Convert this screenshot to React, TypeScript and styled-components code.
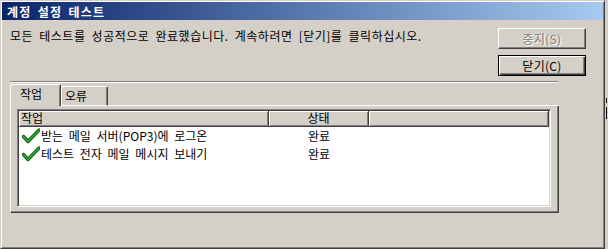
import React from "react";
import styled, { createGlobalStyle, css } from "styled-components";

const GlobalStyle = createGlobalStyle`
  html, body { margin: 0; padding: 0; background: #d4d0c8; }
  body {
    width: 608px; height: 249px; overflow: hidden;
    font-family: "Noto Sans CJK KR", "Noto Sans", sans-serif;
    font-size: 12px; color: #000;
  }
`;

const Screen = styled.div`
  display: flex;
  width: 608px;
  height: 249px;
`;

const Window = styled.div`
  box-sizing: border-box;
  width: 605px;
  height: 249px;
  flex: none;
  border: 1px solid;
  border-color: #d4d0c8 #404040 #404040 #d4d0c8;
  box-shadow: inset 1px 1px #fff, inset -1px -1px #808080;
  padding: 1px;
  display: flex;
  flex-direction: column;
  background: #d4d0c8;
`;

const TitleBar = styled.div`
  height: 18px;
  flex: none;
  display: flex;
  align-items: center;
  padding-left: 5px;
  background: linear-gradient(to right, #0a246a, #a6caf0);
  color: #fff;
  font-weight: bold;
  font-size: 12px;
  letter-spacing: 1.3px;
  word-spacing: 2px;
`;

const TopRow = styled.div`
  display: flex;
  justify-content: space-between;
  align-items: flex-start;
  padding: 8px 17px 0 8px;
`;

const Message = styled.div`
  line-height: 15px;
  letter-spacing: 0.5px;
  word-spacing: 3px;
`;

const ButtonColumn = styled.div`
  display: flex;
  flex-direction: column;
  gap: 6px;
`;

const Button = styled.button<{ $default?: boolean }>`
  box-sizing: border-box;
  width: 88px;
  height: 21px;
  padding: 0;
  margin: 0;
  background: #d4d0c8;
  font: inherit;
  font-size: 12px;
  line-height: 16px;
  letter-spacing: 0.3px;
  color: #000;
  border: 1px solid;
  border-color: #fff #404040 #404040 #fff;
  box-shadow: inset -1px -1px #808080;
  ${(p) =>
    p.$default &&
    css`
      border-color: #000;
      box-shadow: inset 1px 1px #fff, inset -1px -1px #404040,
        inset -2px -2px #808080;
    `}
  &:disabled {
    color: #808080;
    text-shadow: 1px 1px #fff;
  }
`;

const Separator = styled.div`
  width: 548px;
  height: 0;
  margin: 5px 0 0 8px;
  border-top: 1px solid #808080;
  border-bottom: 1px solid #fff;
`;

const TabSection = styled.div`
  width: 549px;
  margin: 1px 0 0 8px;
  display: flex;
  flex-direction: column;
`;

const TabStrip = styled.div`
  display: flex;
  align-items: flex-end;
  height: 22px;
`;

const Tab = styled.div<{ $active?: boolean }>`
  box-sizing: border-box;
  display: flex;
  align-items: center;
  line-height: 16px;
  border-top: 1px solid #fff;
  border-left: 1px solid #fff;
  border-right: 1px solid #404040;
  box-shadow: inset -1px 0 #808080;
  border-radius: 2px 2px 0 0;
  ${(p) =>
    p.$active
      ? css`
          width: 51px;
          height: 22px;
          padding: 0 0 4px 9px;
        `
      : css`
          width: 47px;
          height: 20px;
          padding: 0 0 0 3px;
          border-bottom: 1px solid #fff;
        `}
`;

const TabFiller = styled.div`
  flex: 1;
  border-bottom: 1px solid #fff;
`;

const Panel = styled.div`
  box-sizing: border-box;
  height: 107px;
  border-left: 1px solid #fff;
  border-right: 1px solid #404040;
  border-bottom: 1px solid #404040;
  box-shadow: inset -1px -1px #808080;
  padding: 3px 7px 5px 6px;
`;

const ListBox = styled.div`
  box-sizing: border-box;
  width: 534px;
  height: 98px;
  padding: 1px;
  background: #fff;
  border: 1px solid;
  border-color: #808080 #fff #fff #808080;
  box-shadow: inset 1px 1px #404040, inset -1px -1px #d4d0c8;
`;

const HeaderRow = styled.div`
  display: grid;
  grid-template-columns: 250px 100px 1fr;
  height: 16px;
`;

const HeaderCell = styled.div<{ $center?: boolean }>`
  box-sizing: border-box;
  background: #d4d0c8;
  border-right: 1px solid #404040;
  border-bottom: 1px solid #404040;
  box-shadow: inset 1px 1px #fff, inset -1px -1px #808080;
  line-height: 14px;
  padding-left: 2px;
  text-align: ${(p) => (p.$center ? "center" : "left")};
  ${(p) => p.$center && css`padding-left: 0;`}
`;

const Row = styled.div`
  display: grid;
  grid-template-columns: 250px 100px 1fr;
  height: 18px;
`;

const NameCell = styled.div`
  display: flex;
  align-items: center;
  padding-left: 3px;
  line-height: 18px;
  word-spacing: 3px;
  white-space: nowrap;
`;

const StatusCell = styled.div`
  text-align: center;
  line-height: 18px;
`;

const CheckIcon = styled.svg`
  width: 18px;
  height: 16px;
  flex: none;
  margin-right: 1px;
`;

const Backdrop = styled.div`
  width: 3px;
  display: flex;
  flex-direction: column;
  gap: 4px;
  padding: 98px 0 0 1px;
`;

const BackdropMark = styled.div<{ $h: number }>`
  width: 1px;
  height: ${(p) => p.$h}px;
  background: #000;
`;

const Check = () => (
  <CheckIcon viewBox="0 0 18 16">
    <path
      d="M1.5 8.5 L6 13.5 L17 2"
      fill="none"
      stroke="#0c640c"
      strokeWidth="3.4"
      strokeLinejoin="round"
      strokeLinecap="round"
    />
    <path
      d="M1.5 8.5 L6 13.5 L17 2"
      fill="none"
      stroke="#35a835"
      strokeWidth="1.5"
      strokeLinejoin="round"
      strokeLinecap="round"
    />
  </CheckIcon>
);

const tasks = [
  { name: "받는 메일 서버(POP3)에 로그온", status: "완료" },
  { name: "테스트 전자 메일 메시지 보내기", status: "완료" },
];

export default function App() {
  return (
    <>
      <GlobalStyle />
      <Screen>
        <Window>
          <TitleBar>계정 설정 테스트</TitleBar>
          <TopRow>
            <Message>
              모든 테스트를 성공적으로 완료했습니다. 계속하려면 [닫기]를 클릭하십시오.
            </Message>
            <ButtonColumn>
              <Button disabled>중지(S)</Button>
              <Button $default>닫기(C)</Button>
            </ButtonColumn>
          </TopRow>
          <Separator />
          <TabSection>
            <TabStrip>
              <Tab $active>작업</Tab>
              <Tab>오류</Tab>
              <TabFiller />
            </TabStrip>
            <Panel>
              <ListBox>
                <HeaderRow>
                  <HeaderCell>작업</HeaderCell>
                  <HeaderCell $center>상태</HeaderCell>
                  <HeaderCell />
                </HeaderRow>
                {tasks.map((t) => (
                  <Row key={t.name}>
                    <NameCell>
                      <Check />
                      {t.name}
                    </NameCell>
                    <StatusCell>{t.status}</StatusCell>
                    <div />
                  </Row>
                ))}
              </ListBox>
            </Panel>
          </TabSection>
        </Window>
        <Backdrop>
          <BackdropMark $h={5} />
          <BackdropMark $h={12} />
        </Backdrop>
      </Screen>
    </>
  );
}
